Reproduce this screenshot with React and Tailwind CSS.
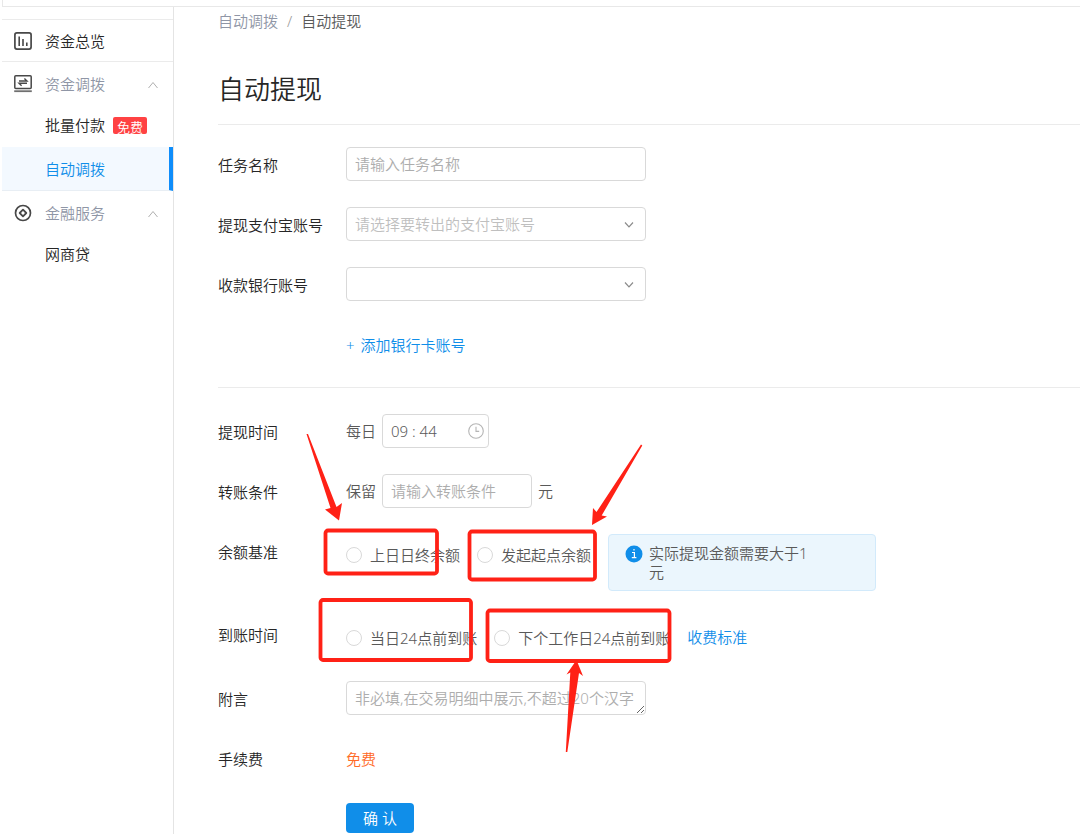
// src/features/transfer/AutoWithdrawPage.jsx
import { useState } from "react";

const FIELD = "h-[34px] rounded border border-[#d9d9d9] bg-white px-2 text-[15px] text-[#595959] outline-none focus:border-[#108ee9]";

function ChevronUp() {
    return (
        <svg className="h-3 w-3" viewBox="0 0 12 12" fill="none" stroke="#b0b0b0" strokeWidth="1">
            <path d="M1.5 10L6 4.5L10.5 10" />
        </svg>
    );
}

function OverviewIcon() {
    return (
        <svg className="h-5 w-5" viewBox="0 0 20 20" fill="none" stroke="#484848">
            <rect x="1.9" y="1.9" width="16.2" height="16.2" rx="2" strokeWidth="1.7" />
            <path d="M6.2 5.5v9.5M10 8v7M13.8 11.5v3.5" strokeWidth="1.6" />
        </svg>
    );
}

function TransferIcon() {
    return (
        <svg className="h-5 w-5" viewBox="0 0 20 20" fill="none" stroke="#484848">
            <rect x="1.8" y="1.8" width="16.4" height="12.6" rx="1" strokeWidth="1.5" />
            <path d="M1.2 17.2h17.6" strokeWidth="1.8" stroke="#707070" />
            <path d="M6 7h8L11.4 4.5M14 9.3H6l2.6 2.5" strokeWidth="1.4" />
        </svg>
    );
}

function FinanceIcon() {
    return (
        <svg className="h-5 w-5" viewBox="0 0 20 20" fill="none" stroke="#484848">
            <circle cx="10" cy="10" r="7.5" strokeWidth="1.7" />
            <path d="M10 6.7L13.3 10L10 13.3L6.7 10Z" strokeWidth="1.8" strokeLinejoin="round" />
        </svg>
    );
}

function GroupHeader({ icon, children }) {
    return (
        <button type="button" className="flex h-[43px] w-full items-center gap-3 pr-3.5 pl-[11px] text-[#8f96a6]">
            {icon}
            <span className="flex-1 text-left">{children}</span>
            <ChevronUp />
        </button>
    );
}

function Sidebar() {
    return (
        <nav className="w-[172px] shrink-0 border-r border-[#e4e4e4] text-[#262626]">
            <div className="h-[13px] border-b border-[#ebebeb]" />
            <a href="#overview" className="flex h-[42px] items-center gap-3 border-b border-[#ebebeb] pl-[11px]">
                <OverviewIcon />
                资金总览
            </a>
            <GroupHeader icon={<TransferIcon />}>资金调拨</GroupHeader>
            <a href="#batch" className="flex h-[42px] items-center gap-2 pb-0.5 pl-[43px]">
                批量付款
                <span className="h-[17px] rounded-xs bg-[#ff4243] px-1 text-[13px] leading-5 text-white">免费</span>
            </a>
            <a href="#auto" className="flex h-11 items-center border-r-4 border-b border-r-[#0f8dfa] border-b-[#e8eef4] bg-[#f3f9ff] pl-[43px] text-[#108ee9]">
                自动调拨
            </a>
            <GroupHeader icon={<FinanceIcon />}>金融服务</GroupHeader>
            <a href="#loan" className="flex h-[42px] items-center pb-0.5 pl-[43px]">网商贷</a>
        </nav>
    );
}

function Row({ label, htmlFor, className = "min-h-[34px]", children }) {
    return (
        <div className={`flex items-start ${className}`}>
            <label htmlFor={htmlFor} className="h-[34px] w-32 shrink-0 leading-9 text-[#262626]">{label}</label>
            {children}
        </div>
    );
}

function Select({ id, label, children }) {
    return (
        <div className="relative w-[300px]">
            <select id={id} aria-label={label} defaultValue="" className={`${FIELD} w-full appearance-none text-[#bfbfbf]`}>
                {children}
            </select>
            <svg className="pointer-events-none absolute top-3 right-3 h-2.5 w-2.5" viewBox="0 0 10 10" fill="none" stroke="#8c8c8c" strokeWidth="1.2">
                <path d="M1 3.5L5 7.9L9 3.5" />
            </svg>
        </div>
    );
}

function Radio({ name, value, current, onChange, children }) {
    return (
        <label className="flex h-[38px] shrink-0 items-center gap-2 pt-1">
            <input
                type="radio"
                name={name}
                value={value}
                checked={current === value}
                onChange={() => onChange(value)}
                className="h-4 w-4 appearance-none rounded-full border border-[#d9d9d9] bg-white checked:border-4 checked:border-[#108ee9]"
            />
            {children}
        </label>
    );
}

// hand-drawn style marks that point at the four radio options
function Marks() {
    return (
        <svg className="pointer-events-none absolute top-0 left-0" width="700" height="780" viewBox="0 0 700 780" fill="none" aria-hidden="true">
            <g stroke="#ff2116" strokeWidth="3.8">
                <rect x="325.5" y="530.5" width="111.5" height="43" rx="2.5" />
                <rect x="469.5" y="531.5" width="125.5" height="48" rx="2.5" />
                <rect x="320.5" y="600" width="150.5" height="60" rx="2.5" />
                <rect x="487.5" y="610.5" width="182" height="50.5" rx="2.5" />
            </g>
            <g fill="#ff2116">
                <path d="M306.5 434L308 434L336.5 507L342 503L339 520.5L325 509.5L330.5 508Z" />
                <path d="M641 444.5L642.3 445.5L601.7 515.5L607 516.5L592 525L593 508L596.5 512Z" />
                <path d="M576.5 660L583 676L579 673L567.3 752L565.8 752L570.3 672.5L566.5 674.5Z" />
            </g>
        </svg>
    );
}

export default function App() {
    const [basis, setBasis] = useState("");
    const [arrival, setArrival] = useState("");

    return (
        <div className="relative flex min-h-screen flex-col overflow-hidden bg-white pl-0.5 font-['Noto_Sans','Noto_Sans_CJK_SC',sans-serif] text-[15px] leading-5 font-[350] text-[#595959]">
            <div className="h-[7px] border-b border-l border-[#e8e8e8]" />
            <div className="flex flex-1">
                <Sidebar />
                <main className="min-w-0 flex-1 pl-11">
                    <div className="flex h-7 items-center gap-[9px]">
                        <a href="#auto" className="text-[#8f96a6]">自动调拨</a>
                        <span className="text-[#999]">/</span>
                        <span>自动提现</span>
                    </div>
                    <h1 className="mt-9 mb-[17px] text-[26px] leading-9 font-[350] text-[#262626]">自动提现</h1>

                    <form onSubmit={(e) => e.preventDefault()}>
                        <div className="flex flex-col gap-[26px] border-y border-[#ebebeb] pt-[22px] pb-[26px]">
                            <Row label="任务名称" htmlFor="task">
                                <input id="task" placeholder="请输入任务名称" className={`${FIELD} w-[300px] placeholder:text-[#adadad]`} />
                            </Row>
                            <Row label="提现支付宝账号" htmlFor="alipay">
                                <Select id="alipay">
                                    <option value="">请选择要转出的支付宝账号</option>
                                </Select>
                            </Row>
                            <Row label="收款银行账号" htmlFor="bank">
                                <Select id="bank">
                                    <option value=""></option>
                                </Select>
                            </Row>
                            <a href="#add-card" className="ml-32 flex h-[34px] gap-1.5 self-start leading-9 text-[#108ee9]">
                                <span>+</span>
                                添加银行卡账号
                            </a>
                        </div>

                        <div className="flex flex-col gap-[26px] pt-[26px]">
                            <Row label="提现时间" htmlFor="time">
                                <div className="flex items-center gap-1.5">
                                    每日
                                    <div className="relative">
                                        <input id="time" defaultValue="09 : 44" className={`${FIELD} w-[107px]`} />
                                        <svg className="absolute top-[9px] right-[5px] h-4 w-4" viewBox="0 0 16 16" fill="none" stroke="#b5b5b5" strokeWidth="1.1">
                                            <circle cx="8" cy="8" r="7.3" />
                                            <path d="M8 3.8V8.4H11.2" />
                                        </svg>
                                    </div>
                                </div>
                            </Row>
                            <Row label="转账条件" htmlFor="keep">
                                <div className="flex items-center gap-1.5">
                                    保留
                                    <input id="keep" placeholder="请输入转账条件" className={`${FIELD} w-[150px] placeholder:text-[#adadad]`} />
                                    元
                                </div>
                            </Row>
                            <Row label="余额基准">
                                <div className="flex gap-[17px]">
                                    <Radio name="basis" value="prev" current={basis} onChange={setBasis}>上日日终余额</Radio>
                                    <Radio name="basis" value="start" current={basis} onChange={setBasis}>发起起点余额</Radio>
                                    <div className="flex h-[57px] w-[268px] items-start gap-1.5 rounded border border-[#d2eafb] bg-[#ebf6fd] pt-[9px] pl-4">
                                        <svg className="mt-px h-[18px] w-[18px] shrink-0" viewBox="0 0 18 18">
                                            <circle cx="9" cy="9" r="8.5" fill="#108ee9" />
                                            <path d="M7 7.5h2.4v5M6.8 12.7h4.6M9 4v1.6" stroke="#fff" strokeWidth="1.2" fill="none" />
                                        </svg>
                                        <p className="w-[165px] leading-[19px]">实际提现金额需要大于1元</p>
                                    </div>
                                </div>
                            </Row>
                            <Row label="到账时间">
                                <div className="flex gap-[17px]">
                                    <Radio name="arrival" value="same" current={arrival} onChange={setArrival}>当日24点前到账</Radio>
                                    <Radio name="arrival" value="next" current={arrival} onChange={setArrival}>下个工作日24点前到账</Radio>
                                    <a href="#fees" className="h-[38px] leading-10 text-[#108ee9]">收费标准</a>
                                </div>
                            </Row>
                            <Row label="附言" htmlFor="memo">
                                <textarea
                                    id="memo"
                                    rows={1}
                                    placeholder="非必填,在交易明细中展示,不超过20个汉字"
                                    className={`${FIELD} w-[300px] resize overflow-hidden leading-8 placeholder:text-[#adadad]`}
                                />
                            </Row>
                            <Row label="手续费" className="h-9">
                                <span className="leading-9 text-[#ff6a26]">免费</span>
                            </Row>
                            <button type="submit" className="ml-32 h-[30px] w-[68px] rounded bg-[#108ee9] text-white">确 认</button>
                        </div>
                    </form>
                </main>
            </div>
            <Marks />
        </div>
    );
}
